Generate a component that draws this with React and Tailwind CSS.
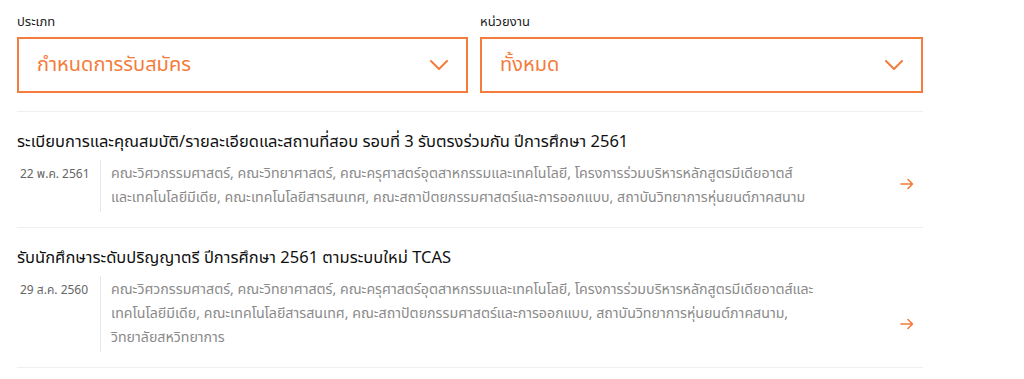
import React from "react";

const FONT = { fontFamily: '"Noto Sans Thai", "Noto Sans", "Liberation Sans", sans-serif' };

function Chevron() {
  return (
    <svg width="18" height="10" viewBox="0 0 18 10" fill="none">
      <polyline points="1,1 9,9 17,1" stroke="#f47c3c" strokeWidth="2" strokeLinecap="round" strokeLinejoin="round" />
    </svg>
  );
}

function Arrow() {
  return (
    <svg width="14" height="12" viewBox="0 0 14 12" fill="none">
      <path d="M1 6H12.5M8 1.5L12.5 6L8 10.5" stroke="#f47c3c" strokeWidth="1.6" strokeLinecap="round" strokeLinejoin="round" />
    </svg>
  );
}

function Select({ label, value, width }) {
  return (
    <div className={`flex flex-col ${width}`}>
      <div className="text-[13px] leading-[20px] text-[#222] mb-[5px]">{label}</div>
      <div className="h-[56px] border-2 border-[#f47c3c] flex items-center justify-between pl-[18px] pr-[18px]">
        <span className="text-[20px] text-[#f47c3c]">{value}</span>
        <Chevron />
      </div>
    </div>
  );
}

function Row({ title, date, lines }) {
  return (
    <div className="border-b border-[#efefef] pt-[18px] pb-[15px]">
      <div className="text-[16.5px] leading-[24px] text-[#111]">{title}</div>
      <div className="flex mt-[6px]">
        <div className="w-[83px] pl-[3px] pt-[2px] text-[12px] leading-[24px] text-[#666]">{date}</div>
        <div className="flex-1 border-l border-[#e8e8e8] pl-[10px] py-[2px] text-[14.2px] leading-[24px] text-[#8a8a8a]">
          {lines.map((l, i) => (
            <div key={i} className="whitespace-nowrap">{l}</div>
          ))}
        </div>
        <div className="self-end mb-[22px] mr-[9px] flex">
          <Arrow />
        </div>
      </div>
    </div>
  );
}

export default function App() {
  return (
    <div className="w-[1024px] h-[379px] bg-white overflow-hidden" style={FONT}>
      <div className="ml-[17px] w-[906px] pt-[12px]">
        <div className="flex gap-[12px] pb-[18px] border-b border-[#efefef]">
          <Select label="ประเภท" value="กำหนดการรับสมัคร" width="w-[451px]" />
          <Select label="หน่วยงาน" value="ทั้งหมด" width="w-[443px]" />
        </div>
        <Row
          title="ระเบียบการและคุณสมบัติ/รายละเอียดและสถานที่สอบ รอบที่ 3 รับตรงร่วมกัน ปีการศึกษา 2561"
          date="22 พ.ค. 2561"
          lines={[
            "คณะวิศวกรรมศาสตร์, คณะวิทยาศาสตร์, คณะครุศาสตร์อุตสาหกรรมและเทคโนโลยี, โครงการร่วมบริหารหลักสูตรมีเดียอาตส์",
            "และเทคโนโลยีมีเดีย, คณะเทคโนโลยีสารสนเทศ, คณะสถาปัตยกรรมศาสตร์และการออกแบบ, สถาบันวิทยาการหุ่นยนต์ภาคสนาม",
          ]}
        />
        <Row
          title="รับนักศึกษาระดับปริญญาตรี ปีการศึกษา 2561 ตามระบบใหม่ TCAS"
          date="29 ส.ค. 2560"
          lines={[
            "คณะวิศวกรรมศาสตร์, คณะวิทยาศาสตร์, คณะครุศาสตร์อุตสาหกรรมและเทคโนโลยี, โครงการร่วมบริหารหลักสูตรมีเดียอาตส์และ",
            "เทคโนโลยีมีเดีย, คณะเทคโนโลยีสารสนเทศ, คณะสถาปัตยกรรมศาสตร์และการออกแบบ, สถาบันวิทยาการหุ่นยนต์ภาคสนาม,",
            "วิทยาลัยสหวิทยาการ",
          ]}
        />
      </div>
    </div>
  );
}
